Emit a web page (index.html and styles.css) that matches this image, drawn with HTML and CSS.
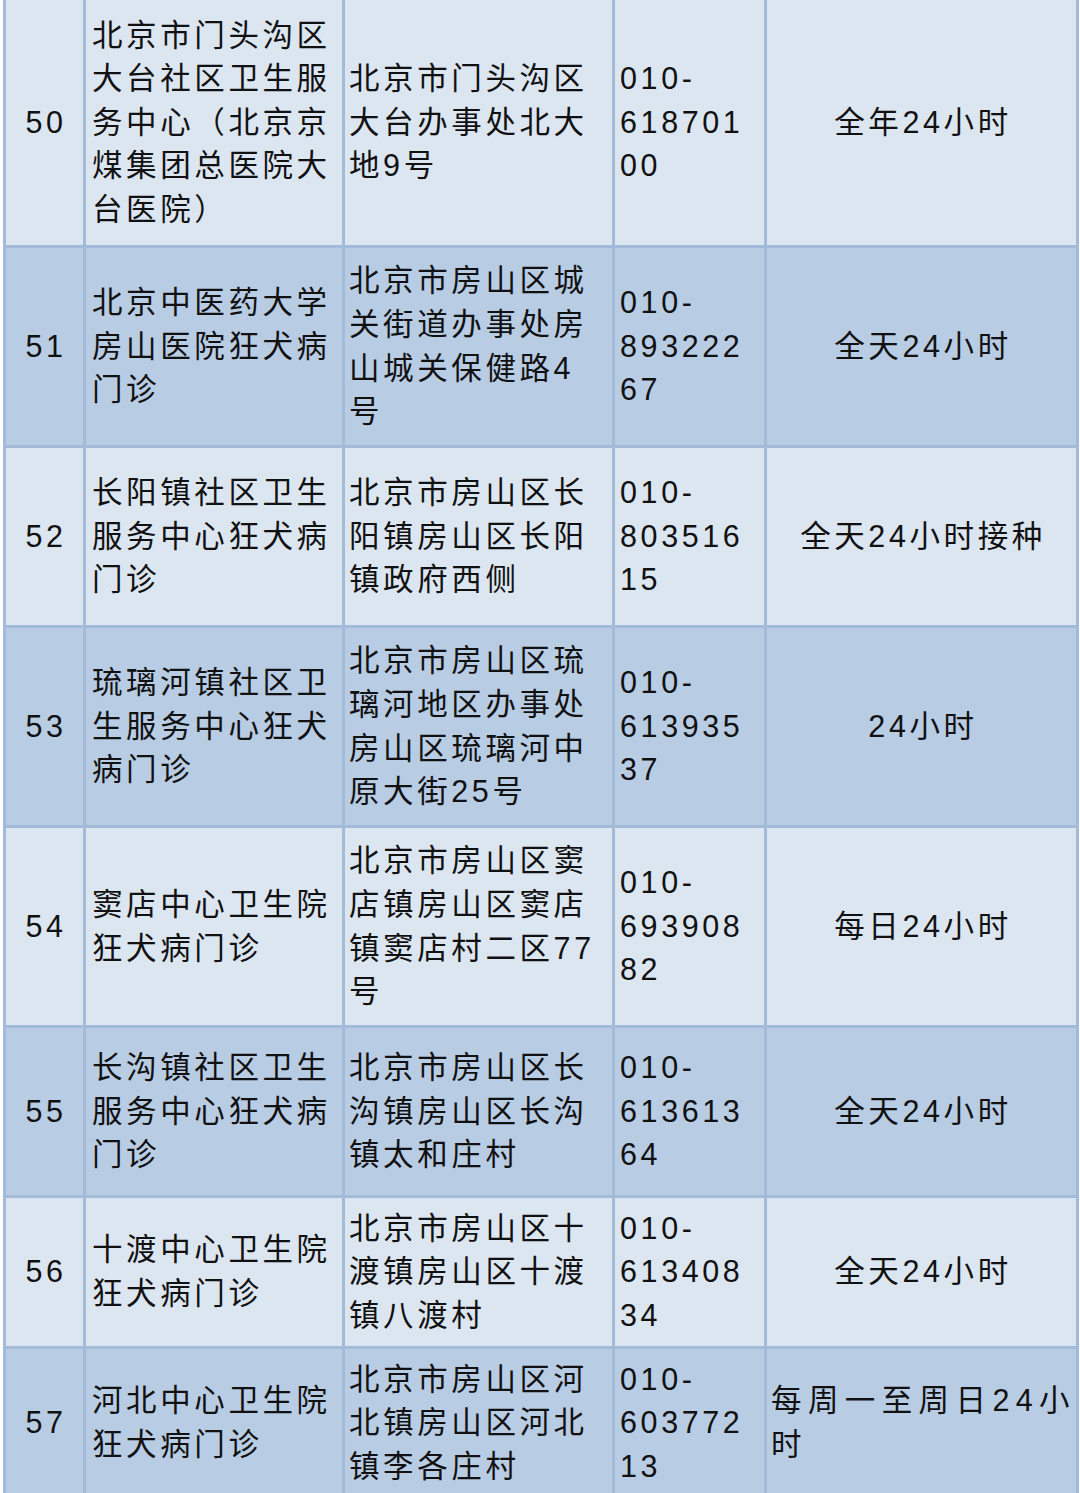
FILE: index.html
```html
<!DOCTYPE html>
<html lang="zh-CN">
<head>
<meta charset="utf-8">
<title>狂犬病门诊</title>
<link rel="stylesheet" href="styles.css">
</head>
<body>
<div class="sheet">
  <div class="row light r50">
    <div class="cell num"><div>50</div></div>
    <div class="cell"><div>北京市门头沟区<br>大台社区卫生服<br>务中心（北京京<br>煤集团总医院大<br>台医院）</div></div>
    <div class="cell addr"><div>北京市门头沟区<br>大台办事处北大<br>地9号</div></div>
    <div class="cell tel"><div>010-<br>618701<br>00</div></div>
    <div class="cell hours"><div>全年24小时</div></div>
  </div>
  <div class="row dark r51">
    <div class="cell num"><div>51</div></div>
    <div class="cell"><div>北京中医药大学<br>房山医院狂犬病<br>门诊</div></div>
    <div class="cell addr"><div>北京市房山区城<br>关街道办事处房<br>山城关保健路4<br>号</div></div>
    <div class="cell tel"><div>010-<br>893222<br>67</div></div>
    <div class="cell hours"><div>全天24小时</div></div>
  </div>
  <div class="row light r52">
    <div class="cell num"><div>52</div></div>
    <div class="cell"><div>长阳镇社区卫生<br>服务中心狂犬病<br>门诊</div></div>
    <div class="cell addr"><div>北京市房山区长<br>阳镇房山区长阳<br>镇政府西侧</div></div>
    <div class="cell tel"><div>010-<br>803516<br>15</div></div>
    <div class="cell hours"><div>全天24小时接种</div></div>
  </div>
  <div class="row dark r53">
    <div class="cell num"><div>53</div></div>
    <div class="cell"><div>琉璃河镇社区卫<br>生服务中心狂犬<br>病门诊</div></div>
    <div class="cell addr"><div>北京市房山区琉<br>璃河地区办事处<br>房山区琉璃河中<br>原大街25号</div></div>
    <div class="cell tel"><div>010-<br>613935<br>37</div></div>
    <div class="cell hours"><div>24小时</div></div>
  </div>
  <div class="row light r54">
    <div class="cell num"><div>54</div></div>
    <div class="cell"><div>窦店中心卫生院<br>狂犬病门诊</div></div>
    <div class="cell addr"><div>北京市房山区窦<br>店镇房山区窦店<br>镇窦店村二区77<br>号</div></div>
    <div class="cell tel"><div>010-<br>693908<br>82</div></div>
    <div class="cell hours"><div>每日24小时</div></div>
  </div>
  <div class="row dark r55">
    <div class="cell num"><div>55</div></div>
    <div class="cell"><div>长沟镇社区卫生<br>服务中心狂犬病<br>门诊</div></div>
    <div class="cell addr"><div>北京市房山区长<br>沟镇房山区长沟<br>镇太和庄村</div></div>
    <div class="cell tel"><div>010-<br>613613<br>64</div></div>
    <div class="cell hours"><div>全天24小时</div></div>
  </div>
  <div class="row light r56">
    <div class="cell num"><div>56</div></div>
    <div class="cell"><div>十渡中心卫生院<br>狂犬病门诊</div></div>
    <div class="cell addr"><div>北京市房山区十<br>渡镇房山区十渡<br>镇八渡村</div></div>
    <div class="cell tel"><div>010-<br>613408<br>34</div></div>
    <div class="cell hours"><div>全天24小时</div></div>
  </div>
  <div class="row dark r57">
    <div class="cell num"><div>57</div></div>
    <div class="cell"><div>河北中心卫生院<br>狂犬病门诊</div></div>
    <div class="cell addr"><div>北京市房山区河<br>北镇房山区河北<br>镇李各庄村</div></div>
    <div class="cell tel"><div>010-<br>603772<br>13</div></div>
    <div class="cell hours wrap"><div><span class="spread">每周一至周日24小</span><br>时</div></div>
  </div>
</div>
</body>
</html>
```

FILE: styles.css
```css
html, body {
  margin: 0;
  padding: 0;
  background: #ffffff;
}

body {
  font-family: "Liberation Sans", "Noto Sans CJK SC", sans-serif;
  font-size: 30.5px;
  line-height: 43.6px;
  letter-spacing: 3.6px;
  color: #111111;
  overflow: hidden;
}

.sheet {
  display: grid;
  grid-template-columns: 77px 256px 267px 149px 309px;
  gap: 3px;
  margin-left: 3px;
  padding: 0 3px 3px;
  width: max-content;
  background: #a3bad8;
}

.row {
  display: grid;
  grid-column: 1 / -1;
  grid-template-columns: subgrid;
}

.r50 { height: 245px; }
.r51 { height: 197px; }
.r52 { height: 177px; }
.r53 { height: 197px; }
.r54 { height: 197px; }
.r55 { height: 167px; }
.r56 { height: 148px; }
.r57 { height: 148px; }

.light .cell { background: #dce6f1; }
.dark .cell { background: #b8cce4; }

.cell {
  display: flex;
  align-items: center;
  padding: 0 0 0 6px;
  white-space: nowrap;
  box-sizing: border-box;
}

.cell.addr { padding-left: 4px; }
.cell.tel { padding-left: 5px; }

.cell.num,
.cell.hours {
  justify-content: center;
  text-align: center;
  padding: 0 0 0 3px;
}

.cell.hours.wrap {
  justify-content: flex-start;
  text-align: left;
  padding-left: 4px;
}

.spread { letter-spacing: 6.4px; }
```
